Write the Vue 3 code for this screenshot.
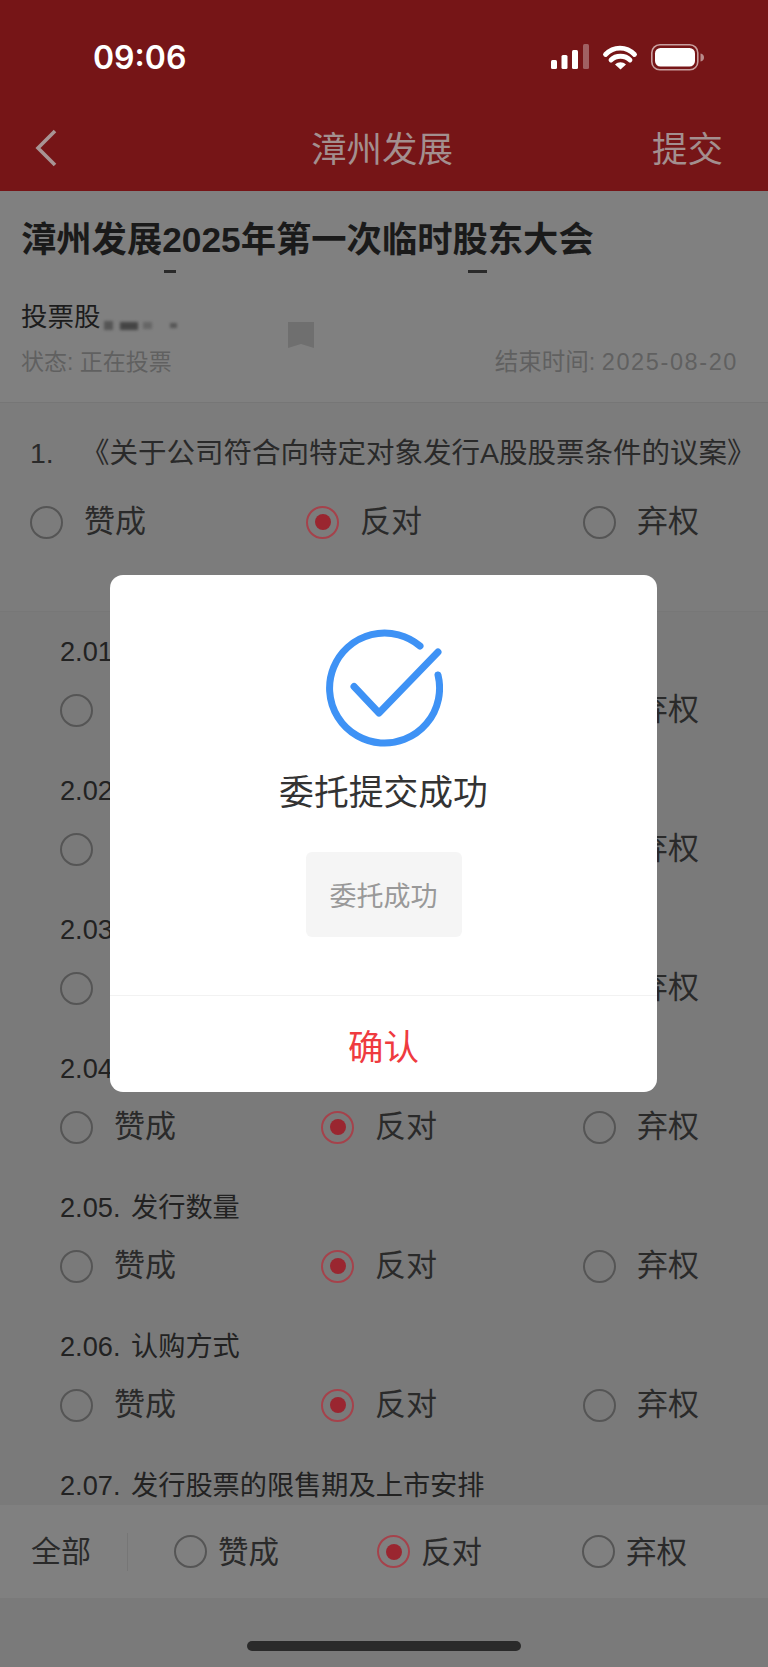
<template>
  <div class="page">
    <!-- 顶部红色导航 -->
    <header class="top">
      <div class="status">
        <span class="time">09:06</span>
        <svg class="status-icons" width="155" height="28" viewBox="0 0 155 28">
          <rect x="0" y="16" width="6" height="9" rx="1.5" fill="#fff" />
          <rect x="10.5" y="11" width="6" height="14" rx="1.5" fill="#fff" />
          <rect x="21" y="6" width="6" height="19" rx="1.5" fill="#fff" />
          <rect x="32" y="0" width="6" height="25" rx="1.5" fill="#a06062" />
          <path d="M54.500 10.500C62.500 2 75.500 2 83.500 10.500" fill="none" stroke="#fff" stroke-width="4.800" stroke-linecap="round" />
          <path d="M60 16C65 11 74 11 79 16" fill="none" stroke="#fff" stroke-width="4.800" stroke-linecap="round" />
          <path d="M64 20.500C67.500 17.500 71.500 17.500 75 20.500L69.500 25.500Z" fill="#fff" />
          <rect x="100.800" y="0.800" width="46" height="25" rx="8" fill="none" stroke="#c9a0a0" stroke-width="1.600" />
          <rect x="104" y="4" width="40" height="18.500" rx="5.500" fill="#fff" />
          <path d="M149.500 9.500C152 10 153 11.500 153 13.500C153 15.500 152 17 149.500 17.500Z" fill="#b98a8a" />
        </svg>
      </div>
      <nav class="nav">
        <svg class="back" width="24" height="38" viewBox="0 0 24 38">
          <path d="M21 2L4 19L21 36" fill="none" stroke="#a89494" stroke-width="3.600" />
        </svg>
        <span class="nav-title">漳州发展</span>
        <span class="nav-action">提交</span>
      </nav>
    </header>

    <main class="content">
      <section class="info">
        <h1 class="meeting">漳州发展2025年第一次临时股东大会</h1>
        <div class="cut-line">
          <i class="cut-a"></i>
          <i class="cut-b"></i>
        </div>
        <p class="holder">投票股</p>
        <div class="meta">
          <span>状态: 正在投票</span>
          <span class="end">结束时间: <span class="date">2025-08-20</span></span>
        </div>
        <!-- 打码痕迹 -->
        <i class="smudge"></i>
        <i class="smudge smudge-2"></i>
        <i class="smudge smudge-3"></i>
        <i class="smudge smudge-4"></i>
        <svg class="mark" width="26" height="26" viewBox="0 0 26 26">
          <path d="M0 0H26V26L13 22L0 26Z" fill="#6f6f6f" />
        </svg>
      </section>

      <section class="first">
        <div class="first-title">
          <span class="no">1.</span>
          <span>《关于公司符合向特定对象发行A股股票条件的议案》</span>
        </div>
        <div class="vote-row first-row">
          <div v-for="o in options" :key="o.label" class="opt">
            <span class="radio" :class="{ on: o.on }"></span>
            <span>{{ o.label }}</span>
          </div>
        </div>
      </section>

      <section class="subs">
        <div v-for="(item, i) in subItems" :key="item" class="sub">
          <div class="sub-title">{{ item }}</div>
          <!-- 最后一项的选项被底部栏挡住 -->
          <div v-if="i < subItems.length - 1" class="vote-row">
            <div v-for="o in options" :key="o.label" class="opt">
              <span class="radio" :class="{ on: o.on }"></span>
              <span>{{ o.label }}</span>
            </div>
          </div>
        </div>
      </section>
    </main>

    <div class="all-bar">
      <span class="all-label">全部</span>
      <div class="vote-row all-row">
        <div v-for="o in options" :key="o.label" class="opt">
          <span class="radio" :class="{ on: o.on }"></span>
          <span>{{ o.label }}</span>
        </div>
      </div>
    </div>
    <div class="safe">
      <span class="home"></span>
    </div>

    <!-- 提交成功弹窗 -->
    <div class="dialog">
      <div class="dialog-body">
        <svg class="ok" width="118" height="118" viewBox="0 0 118 118">
          <path d="M95 17A55 55 0 1 0 113 46" fill="none" stroke="#3e92f5" stroke-width="7" stroke-linecap="round" />
          <path d="M29 57.500L54 84L113 23" fill="none" stroke="#3e92f5" stroke-width="7" stroke-linecap="round" stroke-linejoin="round" />
        </svg>
        <div class="dialog-title">委托提交成功</div>
        <div class="dialog-chip">委托成功</div>
      </div>
      <div class="dialog-btn">确认</div>
    </div>
  </div>
</template>

<script setup>
const options = [
  { label: '赞成', on: false },
  { label: '反对', on: true },
  { label: '弃权', on: false }
]

const subItems = [
  '2.01. 发行种类',
  '2.02. 发行方式',
  '2.03. 发行对象',
  '2.04. 定价方式',
  '2.05. 发行数量',
  '2.06. 认购方式',
  '2.07. 发行股票的限售期及上市安排'
]
</script>

<style>
html,
body {
  margin: 0;
  background: #7a7a7a;
}
</style>

<style scoped>
.page {
  position: relative;
  display: flex;
  flex-direction: column;
  width: 768px;
  height: 1667px;
  overflow: hidden;
  background: #7a7a7a;
  color: #1c1c1c;
  font-family: "Liberation Sans", "Noto Sans CJK SC", sans-serif;
}

.top {
  height: 191px;
  flex-shrink: 0;
  background: #761517;
}

.status {
  display: flex;
  justify-content: space-between;
  align-items: center;
  height: 114px;
  padding: 0 62px 0 93px;
  box-sizing: border-box;
}

.time {
  color: #fff;
  font-family: Inter, "Liberation Sans", sans-serif;
  font-size: 32px;
  font-weight: 600;
  line-height: 114px;
  margin-top: 2px;
}

.status-icons {
  margin-top: 2px;
}

.nav {
  display: flex;
  justify-content: space-between;
  align-items: center;
  height: 68px;
  padding: 0 45px 0 34px;
  color: #a38f8f;
  font-size: 35.500px;
}

.nav-title {
  margin-left: 54px;
  margin-bottom: 4px;
}

.nav-action {
  margin-bottom: 4px;
}

.info {
  position: relative;
  height: 211px;
  flex-shrink: 0;
  padding: 27px 21px 0;
  box-sizing: border-box;
  background: #808080;
}

.meeting {
  margin: 0;
  font-size: 35.300px;
  line-height: 44px;
  font-weight: 700;
  color: #1a1a1a;
}

.cut-line {
  position: relative;
  height: 37px;
}

.cut-line i {
  position: absolute;
  top: 8px;
  height: 3px;
  background: #2a2a2a;
  filter: blur(0.6px);
}

.cut-a {
  left: 143px;
  width: 12px;
}

.cut-b {
  left: 447px;
  width: 19px;
}

.holder {
  margin: 0;
  font-size: 26.500px;
  line-height: 36px;
}

.meta {
  display: flex;
  justify-content: space-between;
  margin-top: 10px;
  padding-right: 9px;
  color: #606060;
  font-size: 23px;
  line-height: 34px;
}

.end {
  font-size: 23.500px;
}

.date {
  letter-spacing: 1.600px;
}

.smudge {
  position: absolute;
  left: 120px;
  top: 131px;
  width: 18px;
  height: 8px;
  background: #444;
  filter: blur(1.500px);
}

.smudge-2 {
  left: 104px;
  top: 130px;
  width: 9px;
  height: 9px;
  background: #555;
}

.smudge-3 {
  left: 143px;
  top: 131px;
  width: 9px;
  height: 7px;
  background: #666;
}

.smudge-4 {
  left: 170px;
  top: 132px;
  width: 7px;
  height: 5px;
  background: #555;
}

.mark {
  position: absolute;
  left: 288px;
  top: 131px;
}

.first {
  height: 210px;
  flex-shrink: 0;
  padding-top: 30px;
  box-sizing: border-box;
  background: #7c7c7c;
  border-top: 1px solid #767676;
  border-bottom: 1px solid #777;
}

.first-title {
  display: flex;
  padding-left: 30px;
  font-size: 28.500px;
  line-height: 40px;
  color: #2a2a2a;
}

.no {
  width: 51px;
  flex-shrink: 0;
}

.vote-row {
  display: grid;
  grid-template-columns: 261px 262px auto;
  padding-left: 60px;
  font-size: 31px;
  line-height: 40px;
  color: #2a2a2a;
}

.first-row {
  grid-template-columns: 276px 277px auto;
  margin-top: 29px;
  padding-left: 30px;
}

.opt {
  display: flex;
  align-items: center;
  gap: 21px;
}

.radio {
  position: relative;
  width: 33px;
  height: 33px;
  flex-shrink: 0;
  box-sizing: border-box;
  border: 2px solid #555;
  border-radius: 50%;
}

.radio.on {
  border-color: #a5424b;
}

.radio.on::after {
  content: "";
  position: absolute;
  left: 6.500px;
  top: 6.500px;
  width: 16px;
  height: 16px;
  border-radius: 50%;
  background: #9a2630;
}

.content {
  flex: 1;
  min-height: 0;
  overflow: hidden;
}

.subs {
  padding-top: 20px;
}

.sub {
  height: 139px;
}

.sub-title {
  padding-left: 60px;
  font-size: 27.200px;
  word-spacing: 3px;
  line-height: 40px;
  color: #222;
}

.sub .vote-row {
  margin-top: 18px;
}

.all-bar {
  display: flex;
  align-items: center;
  height: 93px;
  flex-shrink: 0;
  background: #808080;
  color: #2a2a2a;
}

.all-label {
  width: 128px;
  height: 38px;
  flex-shrink: 0;
  padding-left: 31px;
  box-sizing: border-box;
  border-right: 1px solid #767676;
  font-size: 30px;
  line-height: 38px;
}

.all-row {
  grid-template-columns: 203px 205px auto;
  padding-left: 46px;
  font-size: 30.500px;
}

.all-row .opt {
  gap: 11px;
}

.safe {
  display: flex;
  justify-content: center;
  height: 69px;
  flex-shrink: 0;
  padding-top: 43px;
  box-sizing: border-box;
}

.home {
  width: 274px;
  height: 10px;
  border-radius: 5px;
  background: #2a2a2a;
}

.dialog {
  position: absolute;
  left: 110px;
  top: 575px;
  display: flex;
  flex-direction: column;
  width: 547px;
  height: 517px;
  border-radius: 13px;
  background: #fff;
}

.dialog-body {
  display: flex;
  flex-direction: column;
  align-items: center;
  height: 421px;
  padding-top: 54px;
  box-sizing: border-box;
  border-bottom: 1px solid #f2f2f2;
}

.dialog-title {
  margin-top: 24px;
  font-size: 34.800px;
  line-height: 44px;
  color: #333;
}

.dialog-chip {
  display: flex;
  align-items: center;
  justify-content: center;
  width: 156px;
  height: 85px;
  margin-top: 37px;
  border-radius: 6px;
  background: #f5f5f5;
  color: #999;
  font-size: 27px;
}

.dialog-btn {
  flex: 1;
  display: flex;
  align-items: center;
  justify-content: center;
  color: #ef3b3f;
  font-size: 35.500px;
}
</style>
